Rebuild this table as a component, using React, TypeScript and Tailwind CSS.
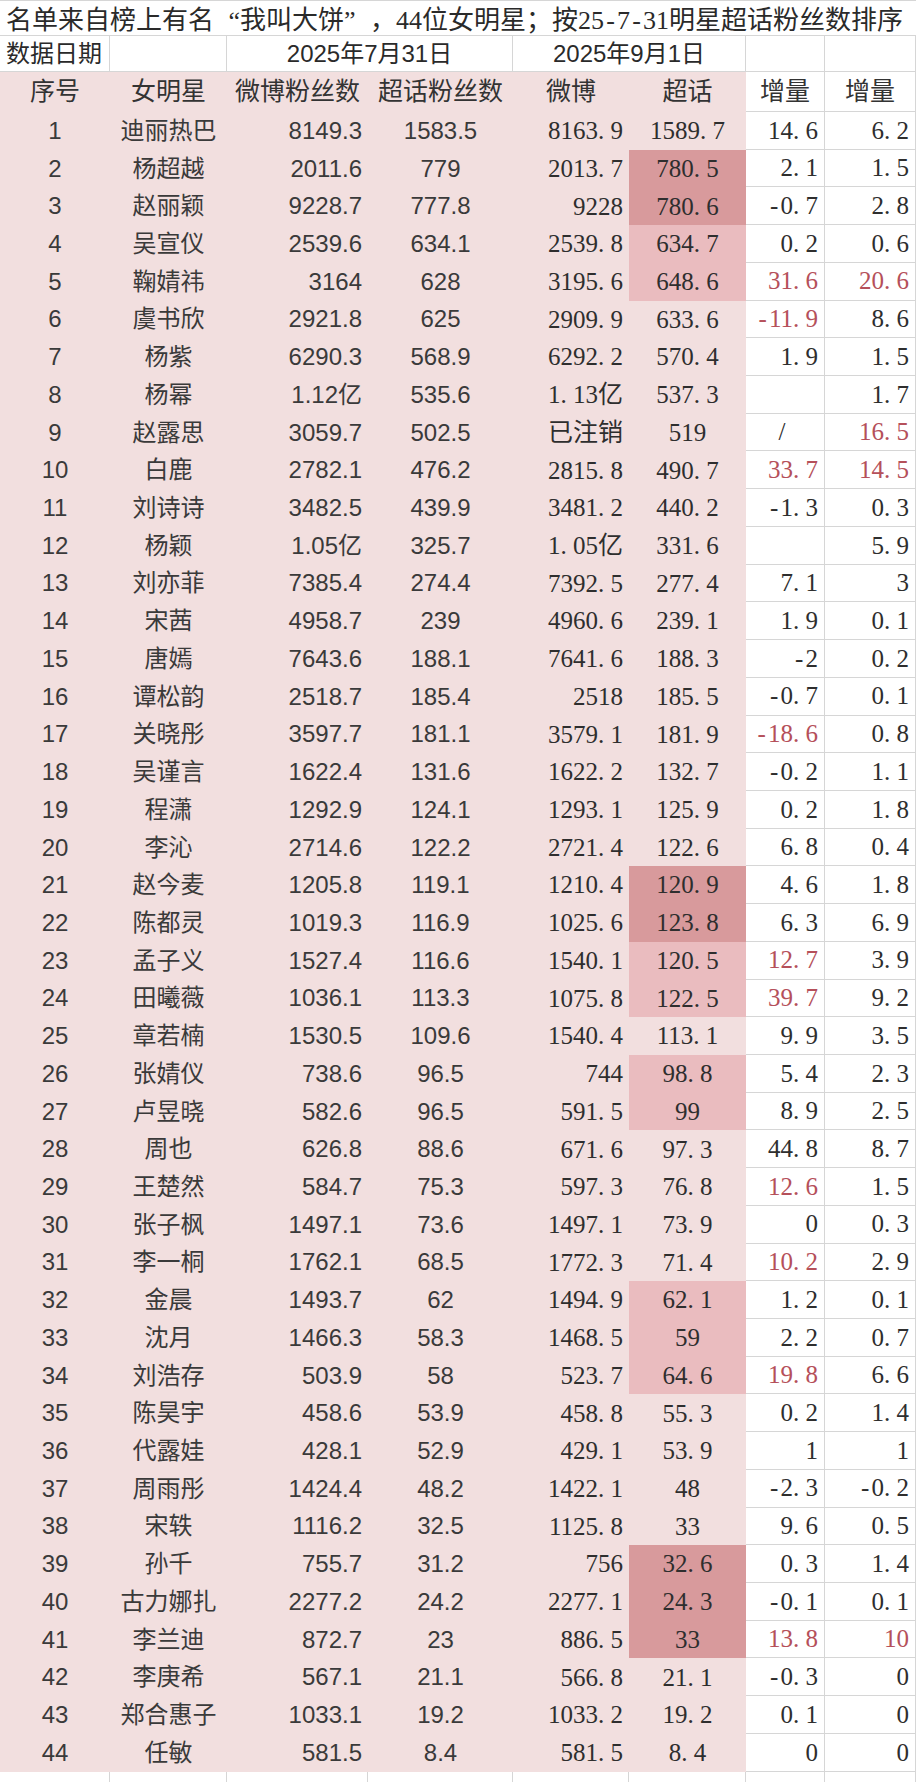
import React from 'react'

// [序号, 女明星, 微博粉丝数, 超话粉丝数, 微博, 超话, 增量, 增量, 高亮, 红字]
// 高亮: d = 深, m = 浅; 红字: 1 = 第一列, 2 = 第二列, 3 = 两列
type Raw = [string, string, string, string, string, string, string, string, string?, number?]

const rows: Raw[] = [
  ['1', '迪丽热巴', '8149.3', '1583.5', '8163.9', '1589.7', '14.6', '6.2'],
  ['2', '杨超越', '2011.6', '779', '2013.7', '780.5', '2.1', '1.5', 'd'],
  ['3', '赵丽颖', '9228.7', '777.8', '9228', '780.6', '-0.7', '2.8', 'd'],
  ['4', '吴宣仪', '2539.6', '634.1', '2539.8', '634.7', '0.2', '0.6', 'm'],
  ['5', '鞠婧祎', '3164', '628', '3195.6', '648.6', '31.6', '20.6', 'm', 3],
  ['6', '虞书欣', '2921.8', '625', '2909.9', '633.6', '-11.9', '8.6', '', 1],
  ['7', '杨紫', '6290.3', '568.9', '6292.2', '570.4', '1.9', '1.5'],
  ['8', '杨幂', '1.12亿', '535.6', '1.13亿', '537.3', '', '1.7'],
  ['9', '赵露思', '3059.7', '502.5', '已注销', '519', '/', '16.5', '', 2],
  ['10', '白鹿', '2782.1', '476.2', '2815.8', '490.7', '33.7', '14.5', '', 3],
  ['11', '刘诗诗', '3482.5', '439.9', '3481.2', '440.2', '-1.3', '0.3'],
  ['12', '杨颖', '1.05亿', '325.7', '1.05亿', '331.6', '', '5.9'],
  ['13', '刘亦菲', '7385.4', '274.4', '7392.5', '277.4', '7.1', '3'],
  ['14', '宋茜', '4958.7', '239', '4960.6', '239.1', '1.9', '0.1'],
  ['15', '唐嫣', '7643.6', '188.1', '7641.6', '188.3', '-2', '0.2'],
  ['16', '谭松韵', '2518.7', '185.4', '2518', '185.5', '-0.7', '0.1'],
  ['17', '关晓彤', '3597.7', '181.1', '3579.1', '181.9', '-18.6', '0.8', '', 1],
  ['18', '吴谨言', '1622.4', '131.6', '1622.2', '132.7', '-0.2', '1.1'],
  ['19', '程潇', '1292.9', '124.1', '1293.1', '125.9', '0.2', '1.8'],
  ['20', '李沁', '2714.6', '122.2', '2721.4', '122.6', '6.8', '0.4'],
  ['21', '赵今麦', '1205.8', '119.1', '1210.4', '120.9', '4.6', '1.8', 'd'],
  ['22', '陈都灵', '1019.3', '116.9', '1025.6', '123.8', '6.3', '6.9', 'd'],
  ['23', '孟子义', '1527.4', '116.6', '1540.1', '120.5', '12.7', '3.9', 'm', 1],
  ['24', '田曦薇', '1036.1', '113.3', '1075.8', '122.5', '39.7', '9.2', 'm', 1],
  ['25', '章若楠', '1530.5', '109.6', '1540.4', '113.1', '9.9', '3.5'],
  ['26', '张婧仪', '738.6', '96.5', '744', '98.8', '5.4', '2.3', 'm'],
  ['27', '卢昱晓', '582.6', '96.5', '591.5', '99', '8.9', '2.5', 'm'],
  ['28', '周也', '626.8', '88.6', '671.6', '97.3', '44.8', '8.7'],
  ['29', '王楚然', '584.7', '75.3', '597.3', '76.8', '12.6', '1.5', '', 1],
  ['30', '张子枫', '1497.1', '73.6', '1497.1', '73.9', '0', '0.3'],
  ['31', '李一桐', '1762.1', '68.5', '1772.3', '71.4', '10.2', '2.9', '', 1],
  ['32', '金晨', '1493.7', '62', '1494.9', '62.1', '1.2', '0.1', 'm'],
  ['33', '沈月', '1466.3', '58.3', '1468.5', '59', '2.2', '0.7', 'm'],
  ['34', '刘浩存', '503.9', '58', '523.7', '64.6', '19.8', '6.6', 'm', 1],
  ['35', '陈昊宇', '458.6', '53.9', '458.8', '55.3', '0.2', '1.4'],
  ['36', '代露娃', '428.1', '52.9', '429.1', '53.9', '1', '1'],
  ['37', '周雨彤', '1424.4', '48.2', '1422.1', '48', '-2.3', '-0.2'],
  ['38', '宋轶', '1116.2', '32.5', '1125.8', '33', '9.6', '0.5'],
  ['39', '孙千', '755.7', '31.2', '756', '32.6', '0.3', '1.4', 'd'],
  ['40', '古力娜扎', '2277.2', '24.2', '2277.1', '24.3', '-0.1', '0.1', 'd'],
  ['41', '李兰迪', '872.7', '23', '886.5', '33', '13.8', '10', 'd', 3],
  ['42', '李庚希', '567.1', '21.1', '566.8', '21.1', '-0.3', '0'],
  ['43', '郑合惠子', '1033.1', '19.2', '1033.2', '19.2', '0.1', '0'],
  ['44', '任敏', '581.5', '8.4', '581.5', '8.4', '0', '0'],
]

const sans = "font-['Liberation_Sans','Noto_Sans_CJK_SC',sans-serif]"
const song = "font-['Liberation_Serif','Noto_Sans_CJK_SC',serif]"
const pink = 'bg-[#f2dfdf]'
const line = 'border-[#d6d6d6]'

// 宋体的半角字符：小数点和负号各占半个字宽
function Song({ v }: { v: string }) {
  return (
    <>
      {v.split('').map((c, i) =>
        c === '.' || c === '-' ? (
          <span key={i} className={`inline-block w-[0.5em] ${c === '.' ? 'text-left' : 'text-center'}`}>
            {c}
          </span>
        ) : (
          <React.Fragment key={i}>{c}</React.Fragment>
        )
      )}
    </>
  )
}

function DataRow({ r }: { r: Raw }) {
  const [no, name, wb1, ch1, wb2, ch2, d1, d2, hl, red = 0] = r
  const hlBg = hl === 'd' ? 'bg-[#d89a9c]' : hl === 'm' ? 'bg-[#eabcbf]' : pink
  const cell = 'h-[37.72px] flex items-center'
  const plus = `${cell} justify-end pr-1.5 bg-white border-r border-b ${line} ${song} text-[25px]`
  return (
    <>
      <div className={`${cell} justify-center ${pink} ${sans} text-[24px] text-[#3a3a3a]`}>{no}</div>
      <div className={`${cell} justify-center ${pink} ${sans} text-[24px] text-[#3a3a3a]`}>{name}</div>
      <div className={`${cell} justify-end pr-1.5 ${pink} ${sans} text-[24px] text-[#3a3a3a]`}>{wb1}</div>
      <div className={`${cell} justify-center ${pink} ${sans} text-[24px] text-[#3a3a3a]`}>{ch1}</div>
      <div className={`${cell} justify-end pr-1.5 ${pink} ${song} text-[25px] text-[#2e2e2e]`}>
        <Song v={wb2} />
      </div>
      <div className={`${cell} justify-center ${hlBg} ${song} text-[25px] text-[#2e2e2e]`}>
        <Song v={ch2} />
      </div>
      <div className={`${plus} ${d1 === '/' ? '!justify-center' : ''} ${red & 1 ? 'text-[#b5505a]' : 'text-[#2e2e2e]'}`}>
        <Song v={d1} />
      </div>
      <div className={`${plus} ${red & 2 ? 'text-[#b5505a]' : 'text-[#2e2e2e]'}`}>
        <Song v={d2} />
      </div>
    </>
  )
}

export default function App() {
  const head = `h-[40px] flex items-center justify-center ${sans} text-[25px] text-[#333]`
  const dateCell = `h-[36px] flex items-center bg-white border-r border-b ${line} ${sans} text-[24px] text-[#2a2a2a]`
  return (
    <div className="w-[916px] bg-white overflow-hidden">
      <div className="grid grid-cols-[110px_117px_141px_145px_116px_117px_79px_91px]">
        {/* 标题 */}
        <div
          className={`col-span-8 h-[36px] flex items-center pl-1.5 pt-1 border-t border-b ${line} ${song} text-[26px] text-[#2a2a2a] whitespace-nowrap`}
        >
          名单来自榜上有名
          <span className="inline-block w-[1em] text-right">“</span>
          我叫大饼
          <span className="inline-block w-[1em] text-left">”</span>
          ，44位女明星；按<Song v="25-7-31" />明星超话粉丝数排序
        </div>

        {/* 数据日期 */}
        <div className={`${dateCell} pl-1.5`}>数据日期</div>
        <div className={dateCell}></div>
        <div className={`${dateCell} col-span-2 justify-center`}>2025年7月31日</div>
        <div className={`${dateCell} col-span-2 justify-center`}>2025年9月1日</div>
        <div className={dateCell}></div>
        <div className={dateCell}></div>

        {/* 表头 */}
        <div className={`${head} ${pink}`}>序号</div>
        <div className={`${head} ${pink}`}>女明星</div>
        <div className={`${head} ${pink}`}>微博粉丝数</div>
        <div className={`${head} ${pink}`}>超话粉丝数</div>
        <div className={`${head} ${pink}`}>微博</div>
        <div className={`${head} ${pink}`}>超话</div>
        <div className={`${head} bg-white border-r border-b ${line}`}>增量</div>
        <div className={`${head} bg-white border-r border-b ${line}`}>增量</div>

        {rows.map((r) => (
          <DataRow key={r[0]} r={r} />
        ))}

        {/* 表格下方空行 */}
        {Array.from({ length: 8 }).map((_, i) => (
          <div key={i} className={`h-[38px] bg-white border-r border-b ${line}`}></div>
        ))}
      </div>
    </div>
  )
}
